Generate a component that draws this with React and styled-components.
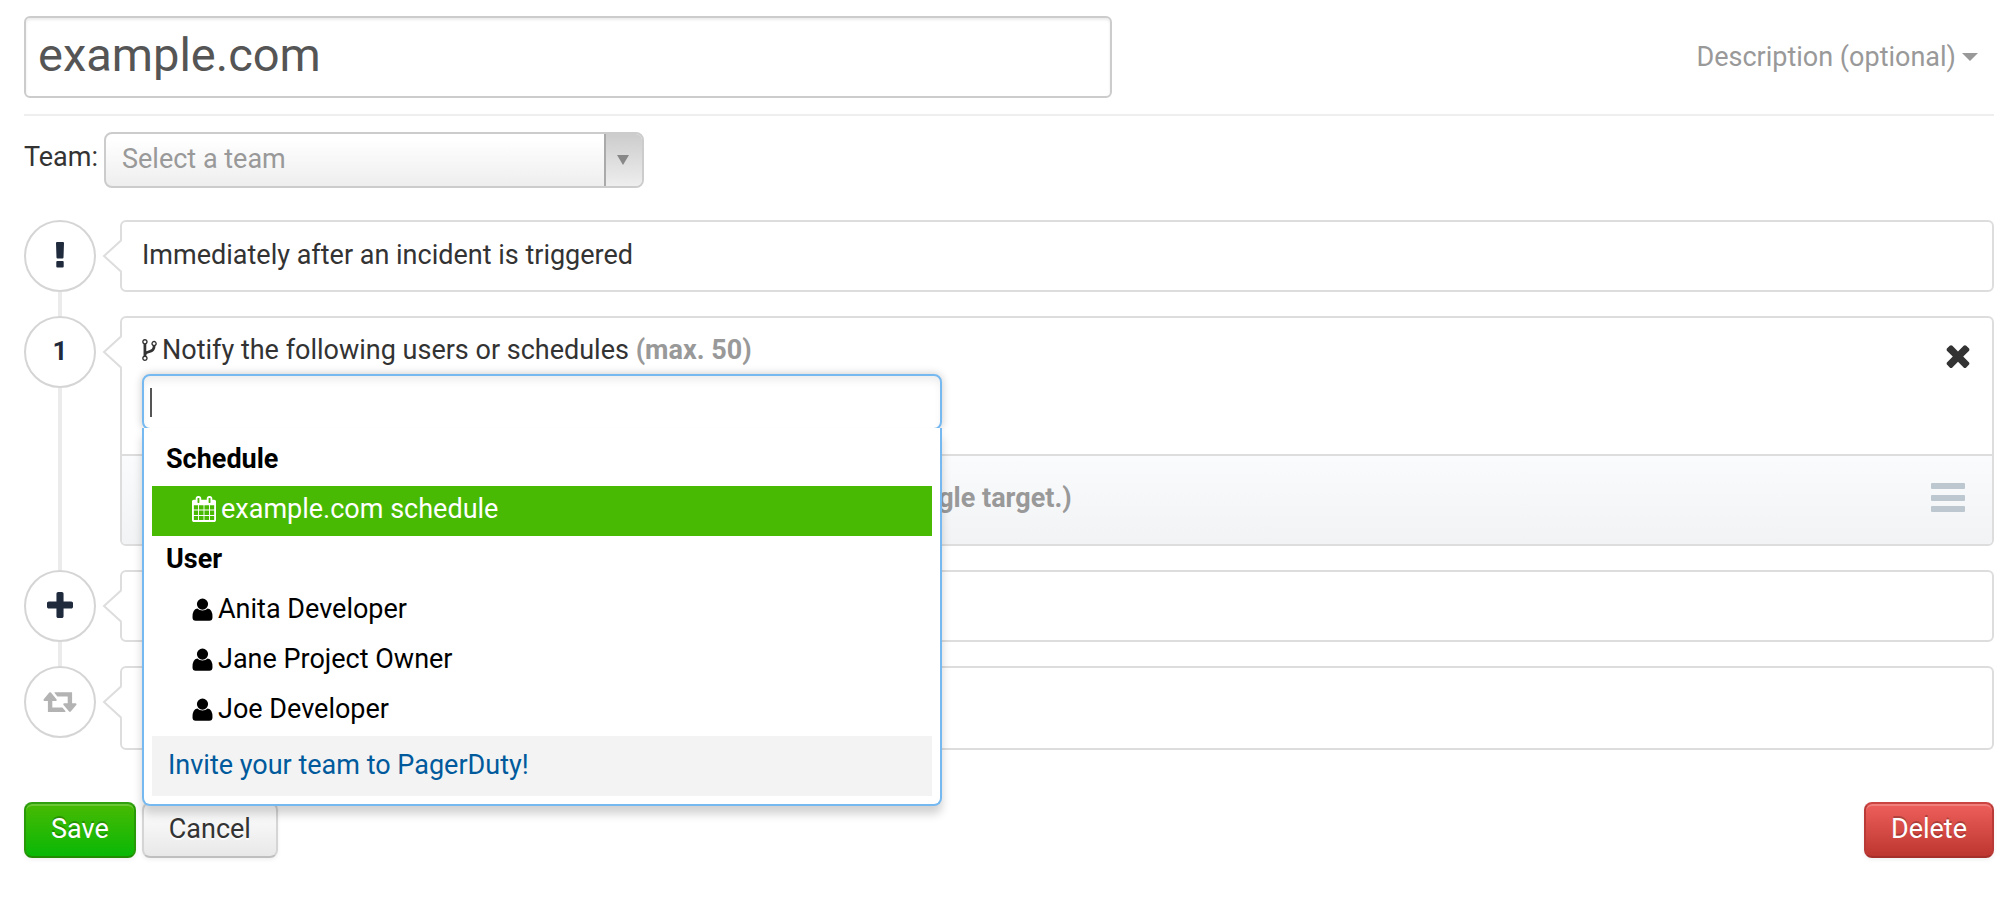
import React from 'react';
import styled, { createGlobalStyle, css } from 'styled-components';

const GlobalStyle = createGlobalStyle`
  *, *::before, *::after { box-sizing: border-box; }
  body {
    margin: 0;
    background: #fff;
    color: #333;
    font-family: Roboto, "Liberation Sans", sans-serif;
    font-size: 27px;
    line-height: 36px;
  }
  button, input, select { font: inherit; }
`;

const Page = styled.main`
  padding: 16px 18px 40px 24px;
`;

const Header = styled.header`
  display: flex;
  align-items: center;
  justify-content: space-between;
  padding-bottom: 16px;
  border-bottom: 2px solid #eee;
`;

const NameInput = styled.input`
  flex: 0 1 1088px;
  min-width: 0;
  height: 82px;
  padding: 0 12px 6px;
  border: 2px solid #ccc;
  border-radius: 6px;
  box-shadow: inset 0 2px 3px rgba(0, 0, 0, 0.08);
  color: #555;
  font-size: 47px;
  outline: none;
`;

const DescriptionToggle = styled.button`
  display: flex;
  align-items: center;
  gap: 6px;
  margin-right: 16px;
  padding: 0;
  border: 0;
  background: none;
  color: #999;
  white-space: nowrap;
`;

const Caret = styled.span`
  border: 8px solid transparent;
  border-top-color: #999;
  border-bottom: 0;
`;

const TeamRow = styled.div`
  display: flex;
  align-items: center;
  gap: 6px;
  margin: 16px 0 32px;
`;

const TeamLabel = styled.label`
  width: 74px;
  padding-bottom: 6px;
`;

const SelectFrame = styled.div`
  display: flex;
  position: relative;
  flex: 0 1 540px;
  height: 56px;
`;

const TeamSelect = styled.select`
  appearance: none;
  width: 100%;
  padding: 0 52px 2px 16px;
  border: 2px solid #ccc;
  border-radius: 8px;
  background: linear-gradient(#fff 10%, #eee);
  color: #999;
  outline: none;
`;

const SelectArrow = styled.span`
  position: absolute;
  top: 2px;
  right: 2px;
  bottom: 2px;
  display: flex;
  align-items: center;
  justify-content: center;
  width: 38px;
  padding-right: 2px;
  border-left: 2px solid #aaa;
  border-radius: 0 6px 6px 0;
  background: linear-gradient(#ccc, #eee);
  pointer-events: none;

  &::before {
    content: "";
    border: 6px solid transparent;
    border-top: 10px solid #888;
    border-bottom: 0;
  }
`;

const Steps = styled.ol`
  margin: 0;
  padding: 0;
  list-style: none;
`;

const Step = styled.li`
  display: flex;
  gap: 24px;
`;

const Rail = styled.div`
  display: flex;
  flex-direction: column;
  align-items: center;
  flex: none;
  width: 72px;
`;

const Marker = styled.div`
  display: flex;
  align-items: center;
  justify-content: center;
  flex: none;
  width: 72px;
  height: 72px;
  padding: 0 0 2px;
  border: 2px solid #d5d5d5;
  border-radius: 50%;
  color: ${(p) => (p.$muted ? '#b3b3b3' : '#1f2a3d')};
  font-size: 26px;
  font-weight: 700;
`;

const MarkerButton = styled(Marker).attrs({ as: 'button', type: 'button' })`
  background: none;
`;

const Connector = styled.div`
  flex: 1;
  width: 4px;
  background: #ebebeb;
`;

const Card = styled.section`
  position: relative;
  flex: 1;
  min-width: 0;
  min-height: ${(p) => (p.$tall ? 84 : 72)}px;
  margin-bottom: ${(p) => (p.$last ? 0 : 24)}px;
  border: 2px solid #ddd;
  border-radius: 6px;
  background: #fff;
`;

const Pointer = styled.svg`
  position: absolute;
  top: 16px;
  left: -20px;
  width: 20px;
  height: 36px;
`;

const CardText = styled.p`
  margin: 0;
  padding: 15px 20px 17px;
`;

const RuleBody = styled.div`
  position: relative;
  display: flex;
  justify-content: space-between;
  align-items: flex-start;
  padding: 14px 22px 24px 20px;
`;

const Targets = styled.div`
  flex: 0 1 800px;
`;

const TargetsLabel = styled.label`
  display: flex;
  align-items: center;
  gap: 5px;
  height: 36px;
  margin-bottom: 6px;
  white-space: nowrap;
`;

const Hint = styled.strong`
  color: #999;
`;

const SearchBox = styled.div`
  position: relative;
  height: 56px;
`;

const SearchInput = styled.input`
  width: 100%;
  height: 56px;
  padding: 0 8px;
  border: 2px solid #75b9f0;
  border-radius: 8px;
  box-shadow: inset 0 6px 8px -2px rgba(0, 0, 0, 0.08), 0 0 8px rgba(0, 0, 0, 0.22);
  background: #fff;
  outline: none;
  caret-color: transparent;
`;

const TextCursor = styled.span`
  position: absolute;
  top: 14px;
  left: 8px;
  width: 2px;
  height: 29px;
  background: #555;
`;

const Menu = styled.div`
  position: absolute;
  z-index: 2;
  top: 54px;
  left: 0;
  right: 0;
  padding: 8px;
  border: 2px solid #75b9f0;
  border-top: 0;
  border-radius: 0 0 8px 8px;
  background: #fff;
  box-shadow: 0 8px 10px rgba(0, 0, 0, 0.18);
  color: #000;
`;

const menuRow = css`
  display: flex;
  align-items: center;
  height: 50px;
  padding-bottom: 4px;
`;

const GroupTitle = styled.div`
  ${menuRow}
  padding-left: 14px;
  font-weight: 700;
`;

const Option = styled.div`
  ${menuRow}
  gap: 5px;
  padding-left: 40px;
  background: ${(p) => (p.$active ? '#48ba03' : 'transparent')};
  color: ${(p) => (p.$active ? '#fff' : '#000')};
`;

const InviteLink = styled.a`
  display: flex;
  align-items: center;
  height: 60px;
  padding: 0 16px 2px;
  background: #f3f3f3;
  color: #005a9c;
  text-decoration: none;
`;

const IconButton = styled.button`
  display: flex;
  padding: 0;
  margin-top: ${(p) => p.$drop || 0}px;
  border: 0;
  background: none;
  color: #333;
`;

const RuleFooter = styled.div`
  display: flex;
  align-items: center;
  justify-content: space-between;
  height: 90px;
  padding: 0 27px 5px 780px;
  border-top: 2px solid #ddd;
  border-radius: 0 0 4px 4px;
  background: linear-gradient(#fafbfd, #f1f3f5);
`;

const Actions = styled.footer`
  display: flex;
  gap: 6px;
  margin-top: 52px;
`;

const tones = {
  save: css`
    border-color: #30a010 #289a08 #1f8c02;
    background: linear-gradient(#48ba03, #09b806);
    color: #fff;
    text-shadow: 0 -2px 0 rgba(0, 0, 0, 0.22);
  `,
  plain: css`
    border-color: #ddd #d5d5d5 #bfbfbf;
    background: linear-gradient(#fff, #e8e8e8);
    color: #333;
    text-shadow: 0 2px 0 rgba(255, 255, 255, 0.75);
  `,
  danger: css`
    margin-left: auto;
    border-color: #cb4441 #b93a36 #a5302b;
    background: linear-gradient(#ee5f5b, #bd362f);
    color: #fff;
    text-shadow: 0 -2px 0 rgba(0, 0, 0, 0.22);
  `,
};

const ActionButton = styled.button`
  height: 56px;
  padding: 0 25px 2px;
  border: 2px solid;
  border-radius: 8px;
  box-shadow: inset 0 2px 0 rgba(255, 255, 255, 0.2), 0 2px 4px rgba(0, 0, 0, 0.06);
  ${(p) => tones[p.$tone]}
`;

function Glyph({ box, width, height, d }) {
  return (
    <svg width={width} height={height} viewBox={box} fill="currentColor" aria-hidden="true">
      <path d={d} />
    </svg>
  );
}

const ForkIcon = () => (
  <Glyph box="384 128 1024 1536" width={15} height={22} d="M672 1472q0-40-28-68t-68-28-68 28-28 68 28 68 68 28 68-28 28-68zm0-1152q0-40-28-68t-68-28-68 28-28 68 28 68 68 28 68-28 28-68zm640 128q0-40-28-68t-68-28-68 28-28 68 28 68 68 28 68-28 28-68zm96 0q0 52-26 96.5t-70 69.5q-2 287-226 414-68 38-203 81-128 40-169.5 71t-41.5 100v26q44 25 70 69.5t26 96.5q0 80-56 136t-136 56-136-56-56-136q0-52 26-96.5t70-69.5v-820q-44-25-70-69.5t-26-96.5q0-80 56-136t136-56 136 56 56 136q0 52-26 96.5t-70 69.5v497q54-26 154-57 55-17 87.5-29.5t70.5-31 59-39.5 40.5-51 28-69.5 8.5-91.5q-44-25-70-69.5t-26-96.5q0-80 56-136t136-56 136 56 56 136z" />
);

const CalendarIcon = () => (
  <Glyph box="64 0 1664 1792" width={24} height={26} d="M192 1664h288v-288h-288v288zm352 0h320v-288h-320v288zm-352-352h288v-320h-288v320zm352 0h320v-320h-320v320zm-352-384h288v-288h-288v288zm736 736h320v-288h-320v288zm-384-736h320v-288h-320v288zm768 736h288v-288h-288v288zm-384-352h320v-320h-320v320zm-352-864v-288q0-13-9.5-22.5t-22.5-9.5h-64q-13 0-22.5 9.5t-9.5 22.5v288q0 13 9.5 22.5t22.5 9.5h64q13 0 22.5-9.5t9.5-22.5zm736 864h288v-320h-288v320zm-384-384h320v-288h-320v288zm384 0h288v-288h-288v288zm32-480v-288q0-13-9.5-22.5t-22.5-9.5h-64q-13 0-22.5 9.5t-9.5 22.5v288q0 13 9.5 22.5t22.5 9.5h64q13 0 22.5-9.5t9.5-22.5zm384-64v1280q0 52-38 90t-90 38h-1408q-52 0-90-38t-38-90v-1280q0-52 38-90t90-38h128v-96q0-66 47-113t113-47h64q66 0 113 47t47 113v96h384v-96q0-66 47-113t113-47h64q66 0 113 47t47 113v96h128q52 0 90 38t38 90z" />
);

const UserIcon = () => (
  <Glyph box="0 0 21 23" width={21} height={23} d="M10.5 0.5a5.6 5.6 0 0 1 0 11.2a5.6 5.6 0 0 1 0-11.2zM5.300 10.600q2.200 2 5.200 2t5.200-2q4.800 0.600 4.800 8.600q0 3.600-3.200 3.600h-13.600q-3.200 0-3.200-3.600q0-8 4.800-8.600z" />
);

const PlusIcon = () => (
  <Glyph box="192 128 1408 1408" width={26} height={26} d="M1600 736v192q0 40-28 68t-68 28h-416v416q0 40-28 68t-68 28h-192q-40 0-68-28t-28-68v-416h-416q-40 0-68-28t-28-68v-192q0-40 28-68t68-28h416v-416q0-40 28-68t68-28h192q40 0 68 28t28 68v416h416q40 0 68 28t28 68z" />
);

const CloseIcon = () => (
  <Glyph box="302 302 1188 1252" width={24} height={24} d="M1490 1322q0 40-28 68l-136 136q-28 28-68 28t-68-28l-294-294-294 294q-28 28-68 28t-68-28l-136-136q-28-28-28-68t28-68l294-294-294-294q-28-28-28-68t28-68l136-136q28-28 68-28t68 28l294 294 294-294q28-28 68-28t68 28l136 136q28 28 28 68t-28 68l-294 294 294 294q28 28 28 68z" />
);

const RepeatIcon = () => (
  <Glyph box="0 256 1920 1280" width={34} height={22} d="M1280 1504q0 13-9.5 22.5t-22.5 9.5h-960q-8 0-13.5-2t-9-7-5.5-8-3-11.5-1-11.5v-600h-192q-26 0-45-19t-19-45q0-24 15-41l320-384q19-22 49-22t49 22l320 384q15 17 15 41 0 26-19 45t-45 19h-192v384h576q16 0 25 11l160 192q7 10 7 21zm640-416q0 24-15 41l-320 384q-20 23-49 23t-49-23l-320-384q-15-17-15-41 0-26 19-45t45-19h192v-384h-576q-16 0-25-12l-160-192q-7-9-7-20 0-13 9.5-22.5t22.5-9.5h960q8 0 13.5 2t9 7 5.5 8 3 11.5 1 11.5v600h192q26 0 45 19t19 45z" />
);

const AlertIcon = () => (
  <Glyph box="0 0 8 26" width={8} height={26} d="M1 0h6q1 0 1 1l-0.5 14.5q0 1-1 1h-5q-1 0-1-1l-0.500-14.500q0-1 1-1zM1.300 19h5.400q1 0 1 1v4.500q0 1-1 1h-5.400q-1 0-1-1v-4.500q0-1 1-1z" />
);

const GripIcon = () => (
  <svg width="34" height="30" viewBox="0 0 34 30" fill="#bcc7cf" aria-hidden="true">
    <rect width="34" height="6" y="0" rx="1" />
    <rect width="34" height="6" y="12" rx="1" />
    <rect width="34" height="6" y="23" rx="1" />
  </svg>
);

const CardPointer = () => (
  <Pointer viewBox="0 0 20 36" aria-hidden="true">
    <path d="M20 1.500L2 18L20 34.500z" fill="#fff" />
    <path d="M19.500 2L2 18L19.500 34" fill="none" stroke="#ddd" strokeWidth="2" />
  </Pointer>
);

const users = ['Anita Developer', 'Jane Project Owner', 'Joe Developer'];

export default function App() {
  return (
    <>
      <GlobalStyle />
      <Page>
        <Header>
          <NameInput aria-label="Policy name" defaultValue="example.com" />
          <DescriptionToggle type="button">
            Description (optional)
            <Caret />
          </DescriptionToggle>
        </Header>

        <TeamRow>
          <TeamLabel htmlFor="team">Team:</TeamLabel>
          <SelectFrame>
            <TeamSelect id="team" defaultValue="">
              <option value="">Select a team</option>
            </TeamSelect>
            <SelectArrow />
          </SelectFrame>
        </TeamRow>

        <Steps>
          <Step>
            <Rail>
              <Marker><AlertIcon /></Marker>
              <Connector />
            </Rail>
            <Card>
              <CardPointer />
              <CardText>Immediately after an incident is triggered</CardText>
            </Card>
          </Step>

          <Step>
            <Rail>
              <Marker>1</Marker>
              <Connector />
            </Rail>
            <Card>
              <CardPointer />
              <RuleBody>
                <Targets>
                  <TargetsLabel htmlFor="targets">
                    <ForkIcon />
                    <span>
                      Notify the following users or schedules <Hint>(max. 50)</Hint>
                    </span>
                  </TargetsLabel>
                  <SearchBox>
                    <SearchInput id="targets" type="text" />
                    <TextCursor />
                    <Menu>
                      <GroupTitle>Schedule</GroupTitle>
                      <Option $active>
                        <CalendarIcon />
                        example.com schedule
                      </Option>
                      <GroupTitle>User</GroupTitle>
                      {users.map((name) => (
                        <Option key={name}>
                          <UserIcon />
                          {name}
                        </Option>
                      ))}
                      <InviteLink href="#invite">Invite your team to PagerDuty!</InviteLink>
                    </Menu>
                  </SearchBox>
                </Targets>
                <IconButton type="button" aria-label="Remove rule" $drop={12}>
                  <CloseIcon />
                </IconButton>
              </RuleBody>
              <RuleFooter>
                <Hint>single target.)</Hint>
                <IconButton type="button" aria-label="Reorder rule">
                  <GripIcon />
                </IconButton>
              </RuleFooter>
            </Card>
          </Step>

          <Step>
            <Rail>
              <MarkerButton aria-label="Add rule"><PlusIcon /></MarkerButton>
              <Connector />
            </Rail>
            <Card>
              <CardPointer />
            </Card>
          </Step>

          <Step>
            <Rail>
              <Marker $muted><RepeatIcon /></Marker>
            </Rail>
            <Card $tall $last>
              <CardPointer />
            </Card>
          </Step>
        </Steps>

        <Actions>
          <ActionButton type="button" $tone="save">Save</ActionButton>
          <ActionButton type="button" $tone="plain">Cancel</ActionButton>
          <ActionButton type="button" $tone="danger">Delete</ActionButton>
        </Actions>
      </Page>
    </>
  );
}
